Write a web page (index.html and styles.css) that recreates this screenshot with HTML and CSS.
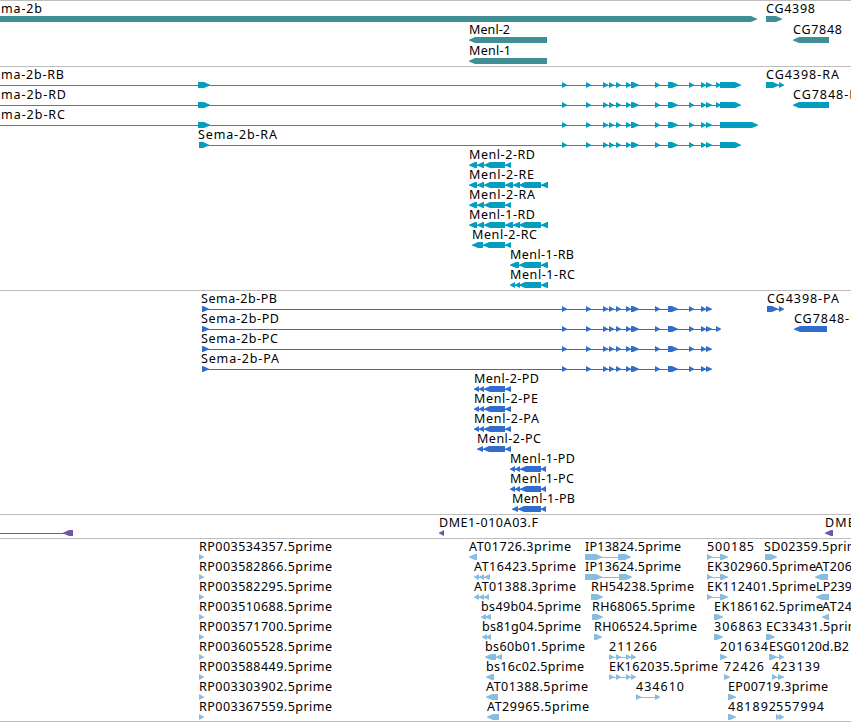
FILE: index.html
```html
<!DOCTYPE html>
<html lang="en">
<head>
<meta charset="utf-8">
<title>Genome browser</title>
<link rel="stylesheet" href="styles.css">
</head>
<body>
<main class="browser" id="browser"></main>
<script src="tracks.js"></script>
</body>
</html>
```
FILE: styles.css
```css
body {
  margin: 0;
  background: #fff;
  overflow: hidden;
}

.browser {
  width: 851px;
  height: 722px;
  box-sizing: border-box;
  overflow: hidden;
  display: flex;
  flex-direction: column;
}

.track {
  border-top: 1px solid #bebebe;
  flex: none;
}

.track:last-child {
  border-bottom: 1px solid #bebebe;
}

.genes { padding-bottom: 2px; color: #3f8f94; }
.transcripts { padding-bottom: 3px; color: #029dbf; }
.proteins { padding-bottom: 3px; color: #316dcd; }
.clones { padding-bottom: 3px; color: #7357a6; }
.ests { padding-bottom: 2px; color: #88bddf; }

.row {
  display: block;
  width: 851px;
  height: 20px;
  overflow: visible;
  fill: currentColor;
}

.genes .row { height: 21px; }

.label {
  font: 12.5px "Noto Sans", "Open Sans", sans-serif;
  fill: #000;
}

.intron { shape-rendering: crispEdges; }
```
FILE: tracks.js
```js
// A feature is [label, labelStart, labelEnd, strand, "exon exon ...", lineStart?].
const tail = "562-567 586-591 603-608 609-614 616-621 626-631 631-639 655-660 668-678 689-694 701-706 706-712";
const tracks = [
  { name: "genes", rows: [
    [["ma-2b", 1, 42, 1, "-9-757"], ["CG4398", 766, 815, 1, "766-782"]],
    [["Menl-2", 469, 510, -1, "469-547"], ["CG7848", 793, 842, -1, "793-829"]],
    [["Menl-1", 469, 511, -1, "469-547"]]
  ]},
  { name: "transcripts", rows: [
    [["ma-2b-RB", 1, 64, 1, "198-210 " + tail + " 716-721 720-741", 0], ["CG4398-RA", 766, 839, 1, "766-779 779-784"]],
    [["ma-2b-RD", 1, 66, 1, "198-210 " + tail + " 716-721 720-741", 0], ["CG7848-RA", 793, 866, -1, "793-829"]],
    [["ma-2b-RC", 1, 65, 1, "198-210 " + tail + " 720-758", 0]],
    [["Sema-2b-RA", 198, 277, 1, "199-209 " + tail + " 720-741"]],
    [["Menl-2-RD", 469, 535, -1, "469-477 477-484 484-505 505-511"]],
    [["Menl-2-RE", 469, 534, -1, "469-477 477-484 484-505 505-513 513-520 519-541 541-548"]],
    [["Menl-2-RA", 469, 535, -1, "469-477 477-484 484-505 505-511"]],
    [["Menl-1-RD", 469, 535, -1, "469-477 477-484 484-505 505-513 513-520 519-541 541-548"]],
    [["Menl-2-RC", 472, 537, -1, "472-483 483-505 505-511"]],
    [["Menl-1-RB", 510, 574, -1, "510-519 519-541 541-548"]],
    [["Menl-1-RC", 510, 575, -1, "510-515 515-520 519-541 541-548"]]
  ]},
  { name: "proteins", rows: [
    [["Sema-2b-PB", 201, 277, 1, "202-209 " + tail], ["CG4398-PA", 767, 839, 1, "767-778 779-784"]],
    [["Sema-2b-PD", 201, 279, 1, "202-209 " + tail + " 716-721"], ["CG7848-PA", 794, 866, -1, "794-827"]],
    [["Sema-2b-PC", 201, 278, 1, "202-209 " + tail]],
    [["Sema-2b-PA", 201, 279, 1, "202-209 " + tail]],
    [["Menl-2-PD", 474, 539, -1, "474-479 479-484 484-505 505-511"]],
    [["Menl-2-PE", 474, 538, -1, "474-479 479-484 484-505 505-511"]],
    [["Menl-2-PA", 474, 539, -1, "474-479 479-484 484-505 505-511"]],
    [["Menl-2-PC", 477, 541, -1, "477-483 483-505 505-511"]],
    [["Menl-1-PD", 510, 575, -1, "510-515 515-520 520-541 541-546"]],
    [["Menl-1-PC", 510, 574, -1, "510-515 515-520 520-541 541-546"]],
    [["Menl-1-PB", 512, 575, -1, "512-518 518-541 541-546"]]
  ]},
  { name: "clones", rows: [
    [["", 0, 0, -1, "63-73", 0], ["DME1-010A03.F", 439, 538, -1, "439-444"], ["DME1", 825, 863, -1, "825-833"]]
  ]},
  { name: "ests", rows: [
    [["RP003534357.5prime", 199, 332, 1, "199-204"], ["AT01726.3prime", 469, 571, -1, "469-477"],
     ["IP13824.5prime", 585, 681, 1, "585-602 618-631"], ["500185", 707, 754, 1, "707-712 720-728"],
     ["SD02359.5prime", 764, 866, 1, "765-777"]],
    [["RP003582866.5prime", 199, 332, 1, "199-204"], ["AT16423.5prime", 474, 576, -1, "474-479 479-484 484-490"],
     ["IP13624.5prime", 585, 681, 1, "585-602 619-632"], ["EK302960.5prime", 707, 816, 1, "707-712 720-728"],
     ["AT206", 815, 852, -1, "815-828"]],
    [["RP003582295.5prime", 199, 332, 1, "199-204"], ["AT01388.3prime", 474, 576, -1, "474-479 479-484 484-489"],
     ["RH54238.5prime", 591, 694, 1, "591-603"], ["EK112401.5prime", 707, 816, 1, "707-712 720-728"],
     ["LP239", 816, 852, -1, "816-829"]],
    [["RP003510688.5prime", 199, 332, 1, "199-204"], ["bs49b04.5prime", 481, 581, -1, "481-486 485-491"],
     ["RH68065.5prime", 592, 695, 1, "592-603"], ["EK186162.5prime", 714, 823, 1, "714-723"],
     ["AT24", 822, 852, -1, "822-829"]],
    [["RP003571700.5prime", 199, 332, 1, "199-204"], ["bs81g04.5prime", 482, 581, -1, "482-487 486-491"],
     ["RH06524.5prime", 594, 697, 1, "594-602"], ["306863", 714, 762, 1, "714-723"],
     ["EC33431.5prime", 766, 867, 1, "766-775"]],
    [["RP003605528.5prime", 199, 332, 1, "199-204"], ["bs60b01.5prime", 485, 585, -1, "485-496 496-502"],
     ["211266", 609, 657, 1, "609-614 616-621 626-631 631-636"], ["201634", 720, 768, 1, "720-727"],
     ["ESG0120d.B2", 769, 849, 1, "769-777 779-784"]],
    [["RP003588449.5prime", 199, 332, 1, "199-204"], ["bs16c02.5prime", 486, 584, -1, "486-494"],
     ["EK162035.5prime", 609, 718, 1, "609-614 616-621 626-631 631-636"], ["72426", 724, 764, 1, "724-730"],
     ["423139", 772, 820, 1, "772-777 778-784"]],
    [["RP003303902.5prime", 199, 332, 1, "199-204"], ["AT01388.5prime", 486, 588, -1, "486-498"],
     ["434610", 636, 684, 1, "636-641 655-660"], ["EP00719.3prime", 728, 828, 1, "728-736"]],
    [["RP003367559.5prime", 199, 332, 1, "199-204"], ["AT29965.5prime", 487, 589, -1, "487-499"],
     ["481892", 728, 776, 1, "728-736"], ["557994", 776, 824, 1, "776-781 779-784"]]
  ]}
];

const NS = "http://www.w3.org/2000/svg";
function add(parent, tag, attrs, text) {
  const el = document.createElementNS(NS, tag);
  for (const key in attrs) el.setAttribute(key, attrs[key]);
  if (text) el.textContent = text;
  parent.appendChild(el);
}

function drawFeature(svg, [label, start, end, strand, exonText, lineStart]) {
  const exons = exonText.split(" ").map(s => s.match(/^(-?\d+)-(\d+)$/).slice(1).map(Number));
  const from = lineStart ?? exons[0][0] + 1;
  const to = exons[exons.length - 1][1] - 1;
  if (exons.length > 1 || lineStart !== undefined) {
    add(svg, "rect", { class: "intron", x: from, y: 18, width: to - from, height: 1 });
  }
  for (const [a, b] of exons) {
    const head = Math.min(6, b - a);
    const tip = strand > 0 ? b : a;
    const base = strand > 0 ? a : b;
    const neck = tip - strand * head;
    add(svg, "polygon", { points: `${base},15 ${neck},15 ${tip},17.8 ${tip},18.5 ${neck},21 ${base},21` });
  }
  if (label) {
    add(svg, "text", { class: "label", x: start, y: 12, textLength: end - start }, label);
  }
}

const browser = document.getElementById("browser");
for (const track of tracks) {
  const section = document.createElement("section");
  section.className = "track " + track.name;
  for (const features of track.rows) {
    const svg = document.createElementNS(NS, "svg");
    svg.setAttribute("class", "row");
    features.forEach(f => drawFeature(svg, f));
    section.appendChild(svg);
  }
  browser.appendChild(section);
}
```
